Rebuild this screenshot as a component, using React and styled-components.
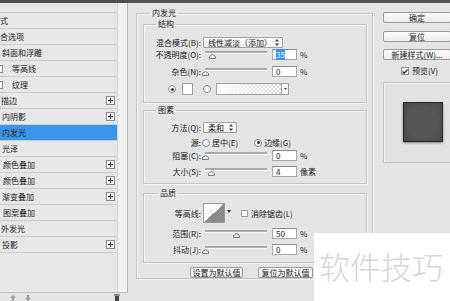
import React from "react";
import styled, { createGlobalStyle } from "styled-components";

const Global = createGlobalStyle`
  html, body { margin: 0; padding: 0; background: #e4e4e4; }
  body { font-family: "Noto Sans CJK SC", "Noto Sans", sans-serif; }
`;

const Frame = styled.div`
  position: relative;
  width: 450px;
  height: 301px;
  overflow: hidden;
  background: #e4e4e4;
  font-family: "Noto Sans CJK SC", "Noto Sans", sans-serif;
  font-size: 8px;
  color: #222;
  display: flex;
  flex-direction: column;
`;

const TopStrip = styled.div`
  height: 3px;
  flex: none;
  background: #505050;
`;

const Main = styled.div`
  flex: 1;
  display: flex;
  min-height: 0;
`;

/* ---------- left list ---------- */
const LeftPanel = styled.div`
  width: 128px;
  flex: none;
  display: flex;
  flex-direction: column;
`;

const ListArea = styled.div`
  flex: 1;
  display: flex;
  min-height: 0;
  border-bottom: 1px solid #c2c2c2;
`;

const List = styled.div`
  width: 117px;
  flex: none;
  overflow: hidden;
  box-sizing: border-box;
  padding-top: 9px;
  background: #e7e7e7;
`;

const Scroll = styled.div`
  width: 11px;
  flex: none;
  box-sizing: border-box;
  background: #f1f1f1;
  border-left: 1px solid #d6d6d6;
  border-right: 1px solid #b9b9b9;
`;

const Row = styled.div`
  height: 16px;
  box-sizing: border-box;
  border-top: 1px solid #cbcbcb;
  display: flex;
  align-items: center;
  white-space: nowrap;
  line-height: 12px;
  background: ${(p) => (p.$active ? "#3b95ea" : "transparent")};
  &:last-child {
    border-bottom: 1px solid #cbcbcb;
    height: 17px;
  }
`;

const RowStart = styled.span`
  display: inline-flex;
  align-items: center;
  margin-left: ${(p) => p.$shift}px;
`;

const Box = styled.span`
  width: 8px;
  height: 8px;
  box-sizing: border-box;
  flex: none;
  border: 1px solid #8c8c8c;
  background: #f7f7f7;
  margin-right: ${(p) => p.$gap}px;
`;

const Plus = styled.span`
  margin-left: auto;
  margin-right: 2px;
  width: 9px;
  height: 9px;
  box-sizing: border-box;
  border: 1px solid #8e8e8e;
  background: #f6f6f6;
  display: flex;
  align-items: center;
  justify-content: center;
`;

const BottomBar = styled.div`
  height: 8px;
  flex: none;
  display: flex;
  align-items: flex-end;
  padding-left: 10px;
  gap: 9px;
`;

const Trash = styled.span`
  margin-left: auto;
  margin-right: 8px;
  display: flex;
`;

/* ---------- content ---------- */
const Content = styled.div`
  width: 250px;
  flex: none;
  box-sizing: border-box;
  padding: 5px 0 0 8px;
`;

const Group = styled.fieldset`
  margin: ${(p) => p.$mt || 0}px 0 0 0;
  padding: ${(p) => `0 ${p.$pr || 0}px ${p.$pb || 0}px ${p.$pl || 0}px`};
  min-width: 0;
  width: ${(p) => (p.$w ? `${p.$w}px` : "auto")};
  box-sizing: border-box;
  border: 1px solid #c6c6c6;
  box-shadow: inset 1px 1px 0 #f3f3f3, 1px 1px 0 #f3f3f3;
`;

const Legend = styled.legend`
  padding: 0 2px;
  margin-left: ${(p) => p.$ml}px;
  font-size: 8px;
  line-height: 10px;
  color: #222;
`;

const FieldRow = styled.div`
  display: flex;
  align-items: center;
  height: ${(p) => p.$h || 11}px;
  margin-top: ${(p) => p.$mt || 0}px;
  white-space: nowrap;
  line-height: 11px;
`;

const Label = styled.span`
  width: 57px;
  flex: none;
  text-align: right;
`;

const Select = styled.div`
  width: ${(p) => p.$w}px;
  height: 11px;
  flex: none;
  box-sizing: border-box;
  margin-left: 2px;
  padding: 0 3px 0 4px;
  border: 1px solid #a4a4a4;
  border-radius: 1px;
  background: linear-gradient(#fdfdfd, #eeeeee);
  display: flex;
  align-items: center;
  justify-content: space-between;
  line-height: 9px;
`;

const Slider = styled.div`
  position: relative;
  width: 62px;
  height: 11px;
  flex: none;
  margin-left: 4px;
`;

const Track = styled.div`
  position: absolute;
  left: 0;
  right: 0;
  top: 2px;
  height: 2px;
  background: linear-gradient(#9c9c9c, #b8b8b8);
  border-bottom: 1px solid #f7f7f7;
`;

const Thumb = styled.svg`
  position: absolute;
  top: 5px;
  margin-left: -3px;
`;

const NumBox = styled.div`
  width: 25px;
  height: 11px;
  flex: none;
  box-sizing: border-box;
  margin-left: 5px;
  padding-left: 3px;
  background: #fff;
  border: 1px solid #a8a8a8;
  border-top-color: #8a8a8a;
  line-height: 9px;
`;

const Selected = styled.span`
  background: #3390ff;
  color: #fff;
`;

const Unit = styled.span`
  margin-left: 3px;
`;

const Radio = styled.span`
  width: 8px;
  height: 8px;
  flex: none;
  box-sizing: border-box;
  border-radius: 50%;
  border: 1px solid #8a8a8a;
  background: #fbfbfb;
  margin-left: ${(p) => p.$ml || 0}px;
  display: inline-flex;
  align-items: center;
  justify-content: center;
  &::after {
    content: "";
    width: 3px;
    height: 3px;
    border-radius: 50%;
    background: ${(p) => (p.$on ? "#333" : "transparent")};
  }
`;

const Swatch = styled.span`
  width: 11px;
  height: 12px;
  flex: none;
  box-sizing: border-box;
  margin-left: ${(p) => p.$ml}px;
  border: 1px solid #a0a0a0;
  background: #fff;
`;

const GradientBox = styled.span`
  width: 66px;
  height: 12px;
  flex: none;
  box-sizing: border-box;
  margin-left: 5px;
  border: 1px solid #a0a0a0;
  background: linear-gradient(to right, #fff 0%, rgba(255, 255, 255, 0) 100%),
    repeating-conic-gradient(#d2d2d2 0 25%, #ffffff 0 50%) 0 0 / 4px 4px;
`;

const DropBox = styled.span`
  width: 7px;
  height: 12px;
  flex: none;
  box-sizing: border-box;
  border: 1px solid #a0a0a0;
  border-left: none;
  background: #f4f4f4;
  display: flex;
  align-items: center;
  justify-content: center;
`;

const Text = styled.span`
  margin-left: ${(p) => p.$ml || 0}px;
`;

const Contour = styled.span`
  width: 22px;
  height: 20px;
  flex: none;
  box-sizing: border-box;
  margin-left: 2px;
  border: 1px solid #9a9a9a;
  background: linear-gradient(to top left, #8b8b8b 50%, #fafafa 50%);
`;

const Caret = styled.svg`
  margin-left: 2px;
  align-self: flex-start;
  margin-top: 7px;
`;

const SmallCheck = styled.span`
  width: 7px;
  height: 7px;
  flex: none;
  box-sizing: border-box;
  margin-left: ${(p) => p.$ml}px;
  border: 1px solid #9a9a9a;
  background: #fff;
`;

const ButtonRow = styled.div`
  display: flex;
  gap: 15px;
  margin-top: 4px;
  padding-left: 47px;
`;

const Button = styled.div`
  width: ${(p) => p.$w}px;
  height: 11px;
  flex: none;
  box-sizing: border-box;
  border: 1px solid #9b9b9b;
  border-radius: 2px;
  background: linear-gradient(#fcfcfc, #ebebeb);
  text-align: center;
  line-height: 9px;
  margin-top: ${(p) => p.$mt || 0}px;
  white-space: nowrap;
`;

/* ---------- right side ---------- */
const Side = styled.div`
  flex: 1;
  display: flex;
  flex-direction: column;
  padding: 9px 0 0 5px;
`;

const PreviewToggle = styled.div`
  display: flex;
  align-items: center;
  height: 10px;
  margin-top: 6px;
  padding-left: 18px;
  line-height: 10px;
  white-space: nowrap;
`;

const CheckBox = styled.span`
  width: 8px;
  height: 8px;
  flex: none;
  box-sizing: border-box;
  border: 1px solid #8c8c8c;
  background: #fff;
  margin-right: 3px;
  display: flex;
  align-items: center;
  justify-content: center;
`;

const PreviewPanel = styled.div`
  width: 72px;
  height: 81px;
  flex: none;
  box-sizing: border-box;
  margin-top: 6px;
  padding: 19px 0 0 19px;
  border: 1px solid #c4c4c4;
  background: #e1e1e1;
  box-shadow: inset 1px 1px 0 #f2f2f2;
`;

const PreviewSquare = styled.div`
  width: 40px;
  height: 40px;
  box-sizing: border-box;
  border: 1px solid #2c2c2c;
  background: radial-gradient(circle, #565656 55%, #4a4a4a 100%);
  box-shadow: inset 0 0 2px #3a3a3a, 0 1px 2px rgba(0, 0, 0, 0.45);
`;

const Watermark = styled.div`
  position: absolute;
  left: 314px;
  top: 233px;
  right: 0;
  bottom: 0;
  background: #fff;
  box-sizing: border-box;
  padding: 17px 0 0 5px;
  font-size: 31px;
  line-height: 31px;
  font-weight: 300;
  color: #d6d6d6;
  white-space: nowrap;
`;

/* ---------- small drawings ---------- */
const PlusIcon = () => (
  <svg width="5" height="5" viewBox="0 0 5 5">
    <path d="M2.5 0v5M0 2.5h5" stroke="#333" strokeWidth="1" />
  </svg>
);

const SpinIcon = () => (
  <svg width="4" height="7" viewBox="0 0 4 7">
    <path d="M2 0L4 2.5H0Z M2 7L4 4.5H0Z" fill="#444" />
  </svg>
);

const ThumbIcon = ({ pos }) => (
  <Thumb width="7" height="5" viewBox="0 0 7 5" style={{ left: `${pos}%` }}>
    <path d="M3.5 0.5L6.5 2.5V4.5H0.5V2.5Z" fill="#f2f2f2" stroke="#7a7a7a" strokeWidth="1" />
  </Thumb>
);

const SliderRow = ({ label, value, pos, unit = "%", mt, selected }) => (
  <FieldRow $mt={mt}>
    <Label>{label}</Label>
    <Slider>
      <Track />
      <ThumbIcon pos={pos} />
    </Slider>
    <NumBox>{selected ? <Selected>{value}</Selected> : value}</NumBox>
    <Unit>{unit}</Unit>
  </FieldRow>
);

const items = [
  { text: "式", shift: 0 },
  { text: "合选项", shift: 0 },
  { text: "斜面和浮雕", check: true, shift: -12, gap: 6 },
  { text: "等高线", check: true, shift: -5, gap: 9 },
  { text: "纹理", check: true, shift: -5, gap: 9 },
  { text: "描边", check: true, shift: -13, gap: 6, plus: true },
  { text: "内阴影", check: true, shift: -12, gap: 6, plus: true },
  { text: "内发光", check: true, shift: -12, gap: 6, active: true },
  { text: "光泽", check: true, shift: -12, gap: 6 },
  { text: "颜色叠加", check: true, shift: -11, gap: 6, plus: true },
  { text: "颜色叠加", check: true, shift: -11, gap: 6, plus: true },
  { text: "渐变叠加", check: true, shift: -12, gap: 6, plus: true },
  { text: "图案叠加", check: true, shift: -11, gap: 6 },
  { text: "外发光", check: true, shift: -13, gap: 6 },
  { text: "投影", check: true, shift: -12, gap: 6, plus: true },
];

export default function App() {
  return (
    <Frame>
      <Global />
      <TopStrip />
      <Main>
        <LeftPanel>
          <ListArea>
            <List>
              {items.map((it, i) => (
                <Row key={i} $active={it.active}>
                  <RowStart $shift={it.shift}>
                    {it.check && <Box $gap={it.gap} />}
                    {it.text}
                  </RowStart>
                  {it.plus && (
                    <Plus>
                      <PlusIcon />
                    </Plus>
                  )}
                </Row>
              ))}
            </List>
            <Scroll />
          </ListArea>
          <BottomBar>
            <svg width="6" height="6" viewBox="0 0 6 6">
              <path d="M3 0L6 3H4V6H2V3H0Z" fill="#9a9a9a" />
            </svg>
            <svg width="6" height="6" viewBox="0 0 6 6">
              <path d="M3 6L6 3H4V0H2V3H0Z" fill="#9a9a9a" />
            </svg>
            <Trash>
              <svg width="6" height="7" viewBox="0 0 6 7">
                <path d="M0 1H6M2 0H4" stroke="#444" strokeWidth="1" />
                <path d="M1 2H5V7H1Z" fill="#444" />
              </svg>
            </Trash>
          </BottomBar>
        </LeftPanel>

        <Content>
          <Group $w={237} $pl={6} $pr={5} $pb={0}>
            <Legend $ml={7}>内发光</Legend>

            <Group $mt={1} $pb={7}>
              <Legend $ml={12}>结构</Legend>
              <FieldRow $mt={8}>
                <Label>混合模式(B):</Label>
                <Select $w={80}>
                  <span>线性减淡（添加）</span>
                  <SpinIcon />
                </Select>
              </FieldRow>
              <SliderRow label="不透明度(O):" value="35" pos={11} mt={1} selected />
              <SliderRow label="杂色(N):" value="0" pos={0} mt={6} />
              <FieldRow $mt={6} $h={12}>
                <Radio $on $ml={24} />
                <Swatch $ml={6} />
                <Radio $ml={10} />
                <GradientBox />
                <DropBox>
                  <svg width="3" height="2" viewBox="0 0 3 2">
                    <path d="M0 0H3L1.5 2Z" fill="#444" />
                  </svg>
                </DropBox>
              </FieldRow>
            </Group>

            <Group $mt={2} $pb={6}>
              <Legend $ml={12}>图素</Legend>
              <FieldRow $mt={7}>
                <Label>方法(Q):</Label>
                <Select $w={34}>
                  <span>柔和</span>
                  <SpinIcon />
                </Select>
              </FieldRow>
              <FieldRow $mt={4}>
                <Label>源:</Label>
                <Radio $ml={1} />
                <Text $ml={2}>居中(E)</Text>
                <Radio $on $ml={16} />
                <Text $ml={2}>边缘(G)</Text>
              </FieldRow>
              <SliderRow label="阻塞(C):" value="0" pos={0} mt={2} />
              <SliderRow label="大小(S):" value="4" pos={10} mt={5} unit="像素" />
            </Group>

            <Group $mt={4} $pb={7}>
              <Legend $ml={14}>品质</Legend>
              <FieldRow $mt={5} $h={20}>
                <Label>等高线:</Label>
                <Contour />
                <Caret width="4" height="3" viewBox="0 0 4 3">
                  <path d="M0 0H4L2 3Z" fill="#333" />
                </Caret>
                <SmallCheck $ml={10} />
                <Text $ml={3}>消除锯齿(L)</Text>
              </FieldRow>
              <SliderRow label="范围(R):" value="50" pos={50} mt={5} />
              <SliderRow label="抖动(J):" value="0" pos={0} mt={5} />
            </Group>

            <ButtonRow>
              <Button $w={53}>设置为默认值</Button>
              <Button $w={55}>复位为默认值</Button>
            </ButtonRow>
          </Group>
        </Content>

        <Side>
          <Button $w={68}>确定</Button>
          <Button $w={68} $mt={8}>复位</Button>
          <Button $w={68} $mt={7}>新建样式(W)...</Button>
          <PreviewToggle>
            <CheckBox>
              <svg width="6" height="5" viewBox="0 0 6 5">
                <path d="M0.5 2.5L2.2 4.2L5.5 0.5" fill="none" stroke="#222" strokeWidth="1.2" />
              </svg>
            </CheckBox>
            预览(V)
          </PreviewToggle>
          <PreviewPanel>
            <PreviewSquare />
          </PreviewPanel>
        </Side>
      </Main>
      <Watermark>软件技巧</Watermark>
    </Frame>
  );
}
